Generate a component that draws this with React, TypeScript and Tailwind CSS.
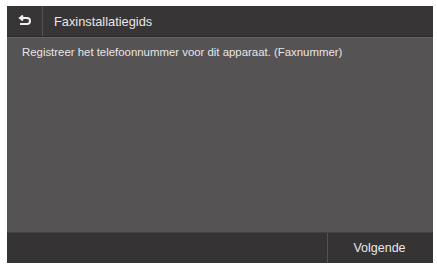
export default function App() {
  return (
    <div className="w-[437px] h-[265px] bg-white pl-[7px] pt-[6px] pr-[4px] pb-[2px]">
      <div
        className="w-[426px] h-[257px] flex flex-col bg-[#565354] text-[#e8e6e6]"
        style={{ fontFamily: '"Liberation Sans Narrow", "Liberation Sans", Arial, sans-serif' }}
      >
        <div className="h-[31px] flex items-stretch bg-[#383536] border-b border-[#2c2a2b]">
          <div className="w-[36px] flex items-center justify-center border-r border-[#555253]">
            <svg width="14" height="12" viewBox="0 0 14 12" fill="none" stroke="#f0eeee" strokeWidth="2">
              <path d="M2 3h7a3 3 0 0 1 0 6H2" />
              <path d="M5 0.5 2 3l3 2.5" strokeLinejoin="miter" />
            </svg>
          </div>
          <div className="flex items-center pl-[11px] pt-[2px] text-[12.8px]">Faxinstallatiegids</div>
        </div>
        <div className="flex-1 px-[15px] pt-[6px] text-[11.4px] border-t border-[#666263]">
          Registreer het telefoonnummer voor dit apparaat. (Faxnummer)
        </div>
        <div className="h-[31px] flex bg-[#363334] border-t border-[#444142]">
          <div className="flex-1 border-r border-[#555253]" />
          <div className="w-[105px] flex items-center justify-center pr-[2px] text-[12.5px]">Volgende</div>
        </div>
      </div>
    </div>
  );
}
